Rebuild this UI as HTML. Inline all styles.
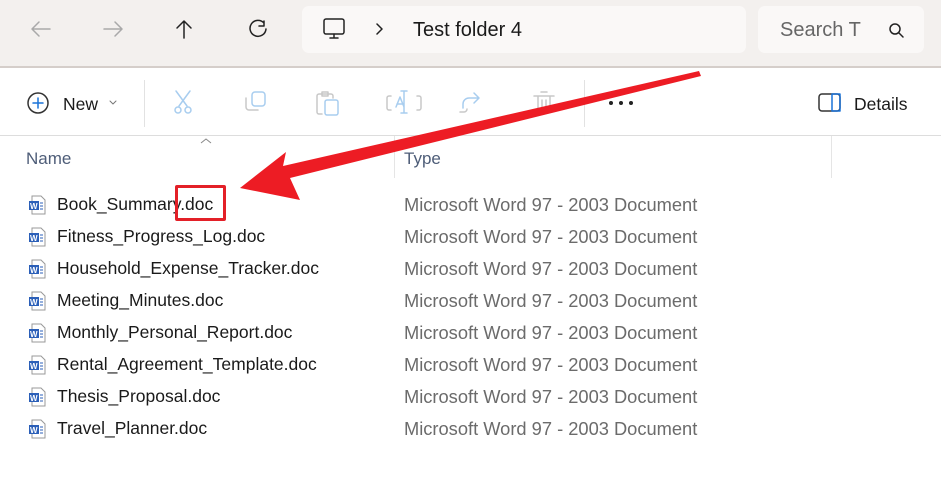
<!DOCTYPE html>
<html><head><style>
body{margin:0;width:941px;height:482px;overflow:hidden;background:#fff;font-family:"Liberation Sans",sans-serif;position:relative}
.top{position:absolute;left:0;top:0;width:941px;height:66px;background:#f3f0ee;border-bottom:2px solid #d5ceca}
.addr{position:absolute;left:302px;top:6px;width:444px;height:47px;background:#faf8f7;border-radius:7px}
.search{position:absolute;left:758px;top:6px;width:166px;height:47px;background:#faf8f7;border-radius:7px}
.t{position:absolute;white-space:nowrap}
.sep{position:absolute;top:80px;width:1px;height:47px;background:#e2e2e2}
.row{position:absolute;left:0;width:941px;height:32px;font-size:17.5px;color:#1a1a1a;white-space:nowrap}
.row .n{position:absolute;left:57px;top:5px}
.row .ty{position:absolute;left:404px;top:5px;color:#6b6b6b;font-size:18.3px}
.ic{position:absolute;left:27px;top:6px}
</style></head><body>
<div class="top"></div>
<div class="addr"></div><div class="search"></div>
<svg width="941" height="70" style="position:absolute;left:0;top:0" fill="none" stroke-linecap="round" stroke-linejoin="round">
<g stroke="#a9a9a9" stroke-width="1.5"><path d="M32 29h18M39 22l-7 7 7 7"/><path d="M104 29h18M115 22l7 7-7 7"/></g>
<g stroke="#222" stroke-width="1.5"><path d="M184 38V21M177 28l7-7 7 7"/><path d="M264 23a8 8 0 1 0 2 6M264 21v5h-5"/>
<rect x="324" y="19" width="20" height="15" rx="2"/><path d="M330 38h8M334 34v4"/><path d="M377 24l5 5-5 5"/>
<circle cx="895" cy="29" r="5"/><path d="M899 33l4 4"/></g>
</svg>
<div class="t" style="left:413px;top:19px;font-size:20px;color:#1a1a1a">Test folder 4</div>
<div class="t" style="left:780px;top:19px;font-size:20px;color:#666">Search T</div>
<svg width="941" height="70" style="position:absolute;left:0;top:68px" fill="none" stroke-linecap="round" stroke-linejoin="round">
<circle cx="38" cy="35" r="10" stroke="#333" stroke-width="1.5"/><path d="M38 30v10M33 35h10" stroke="#1a73d9" stroke-width="1.5"/>
<path d="M110 33l3 3 3-3" stroke="#777" stroke-width="1"/>
<g stroke="#a8cdef" stroke-width="1.5"><path d="M176 23l11 15M190 23l-11 15"/><circle cx="178" cy="42" r="3"/><circle cx="188" cy="42" r="3"/>
<rect x="252" y="24" width="13" height="14" rx="3"/><rect x="325" y="32" width="13" height="15" rx="2"/>
<path d="M404 23v22M401 23h6M401 45h6M396 39l4-10 4 10M397 36h6"/><path d="M463 40v-4a6 6 0 0 1 6-6h10M474 25l5 5-5 5"/></g>
<g stroke="#c8c8c8" stroke-width="1.5"><path d="M246 30v9a3 3 0 0 0 3 3h9"/><path d="M391 28h-2a2 2 0 0 0-2 2v10a2 2 0 0 0 2 2h2M417 28h2a2 2 0 0 1 2 2v10a2 2 0 0 1-2 2h-2"/>
<path d="M534 28h20M538 28v14a2 2 0 0 0 2 2h8a2 2 0 0 0 2-2V28M541 24h6M542 32v8M546 32v8"/><path d="M322 46h-3a2 2 0 0 1-2-2V28a2 2 0 0 1 2-2h12a2 2 0 0 1 2 2v2M322 24h6v4h-6z"/><path d="M460 44h4a3 3 0 0 0 3-3"/></g>
<g fill="#222"><circle cx="611" cy="35" r="2"/><circle cx="621" cy="35" r="2"/><circle cx="631" cy="35" r="2"/></g>
<rect x="819" y="26" width="21" height="17" rx="3" stroke="#333" stroke-width="1.5"/><rect x="832" y="26" width="8" height="17" stroke="#1a73d9" stroke-width="1.5"/>
</svg>
<div class="sep" style="left:144px"></div><div class="sep" style="left:584px"></div>
<div class="t" style="left:63px;top:94px;font-size:17.5px;color:#1a1a1a">New</div>
<div class="t" style="left:854px;top:94px;font-size:17.5px;color:#1a1a1a">Details</div>
<div style="position:absolute;left:0;top:135px;width:941px;height:1px;background:#ddd"></div>
<svg width="20" height="10" style="position:absolute;left:198px;top:136px"><path d="M3 7l5-4 5 4" stroke="#888" fill="none"/></svg>
<div style="position:absolute;left:394px;top:136px;width:1px;height:42px;background:#e5e5e5"></div>
<div style="position:absolute;left:831px;top:136px;width:1px;height:42px;background:#e5e5e5"></div>
<div class="t" style="left:26px;top:149px;font-size:17px;color:#4e5d78">Name</div>
<div class="t" style="left:404px;top:149px;font-size:17px;color:#4e5d78">Type</div>

<div class="row" style="top:189px"><svg class="ic" width="20" height="20"><path d="M5 1h9l4 4v14H5z" fill="#fff" stroke="#999"/><rect x="2" y="6" width="10" height="9" fill="#2b5fb8"/><text x="3" y="14" font-size="8" fill="#fff" font-weight="bold">W</text><path d="M13 8h3M13 11h3M13 14h3" stroke="#2b5fb8"/></svg><span class="n">Book_Summary.doc</span><span class="ty">Microsoft Word 97 - 2003 Document</span></div>
<div class="row" style="top:221px"><svg class="ic" width="20" height="20"><path d="M5 1h9l4 4v14H5z" fill="#fff" stroke="#999"/><rect x="2" y="6" width="10" height="9" fill="#2b5fb8"/><text x="3" y="14" font-size="8" fill="#fff" font-weight="bold">W</text><path d="M13 8h3M13 11h3M13 14h3" stroke="#2b5fb8"/></svg><span class="n">Fitness_Progress_Log.doc</span><span class="ty">Microsoft Word 97 - 2003 Document</span></div>
<div class="row" style="top:253px"><svg class="ic" width="20" height="20"><path d="M5 1h9l4 4v14H5z" fill="#fff" stroke="#999"/><rect x="2" y="6" width="10" height="9" fill="#2b5fb8"/><text x="3" y="14" font-size="8" fill="#fff" font-weight="bold">W</text><path d="M13 8h3M13 11h3M13 14h3" stroke="#2b5fb8"/></svg><span class="n">Household_Expense_Tracker.doc</span><span class="ty">Microsoft Word 97 - 2003 Document</span></div>
<div class="row" style="top:285px"><svg class="ic" width="20" height="20"><path d="M5 1h9l4 4v14H5z" fill="#fff" stroke="#999"/><rect x="2" y="6" width="10" height="9" fill="#2b5fb8"/><text x="3" y="14" font-size="8" fill="#fff" font-weight="bold">W</text><path d="M13 8h3M13 11h3M13 14h3" stroke="#2b5fb8"/></svg><span class="n">Meeting_Minutes.doc</span><span class="ty">Microsoft Word 97 - 2003 Document</span></div>
<div class="row" style="top:317px"><svg class="ic" width="20" height="20"><path d="M5 1h9l4 4v14H5z" fill="#fff" stroke="#999"/><rect x="2" y="6" width="10" height="9" fill="#2b5fb8"/><text x="3" y="14" font-size="8" fill="#fff" font-weight="bold">W</text><path d="M13 8h3M13 11h3M13 14h3" stroke="#2b5fb8"/></svg><span class="n">Monthly_Personal_Report.doc</span><span class="ty">Microsoft Word 97 - 2003 Document</span></div>
<div class="row" style="top:349px"><svg class="ic" width="20" height="20"><path d="M5 1h9l4 4v14H5z" fill="#fff" stroke="#999"/><rect x="2" y="6" width="10" height="9" fill="#2b5fb8"/><text x="3" y="14" font-size="8" fill="#fff" font-weight="bold">W</text><path d="M13 8h3M13 11h3M13 14h3" stroke="#2b5fb8"/></svg><span class="n">Rental_Agreement_Template.doc</span><span class="ty">Microsoft Word 97 - 2003 Document</span></div>
<div class="row" style="top:381px"><svg class="ic" width="20" height="20"><path d="M5 1h9l4 4v14H5z" fill="#fff" stroke="#999"/><rect x="2" y="6" width="10" height="9" fill="#2b5fb8"/><text x="3" y="14" font-size="8" fill="#fff" font-weight="bold">W</text><path d="M13 8h3M13 11h3M13 14h3" stroke="#2b5fb8"/></svg><span class="n">Thesis_Proposal.doc</span><span class="ty">Microsoft Word 97 - 2003 Document</span></div>
<div class="row" style="top:413px"><svg class="ic" width="20" height="20"><path d="M5 1h9l4 4v14H5z" fill="#fff" stroke="#999"/><rect x="2" y="6" width="10" height="9" fill="#2b5fb8"/><text x="3" y="14" font-size="8" fill="#fff" font-weight="bold">W</text><path d="M13 8h3M13 11h3M13 14h3" stroke="#2b5fb8"/></svg><span class="n">Travel_Planner.doc</span><span class="ty">Microsoft Word 97 - 2003 Document</span></div>

<div style="position:absolute;left:175px;top:185px;width:51px;height:36px;border:3px solid #e32028;box-sizing:border-box;border-radius:2px"></div>
<svg width="941" height="482" style="position:absolute;left:0;top:0">
<polygon points="699,71 701,76 290,178 300,200 240,188 286,152 283,166" fill="#ed1c24"/>
</svg>
</body></html>
